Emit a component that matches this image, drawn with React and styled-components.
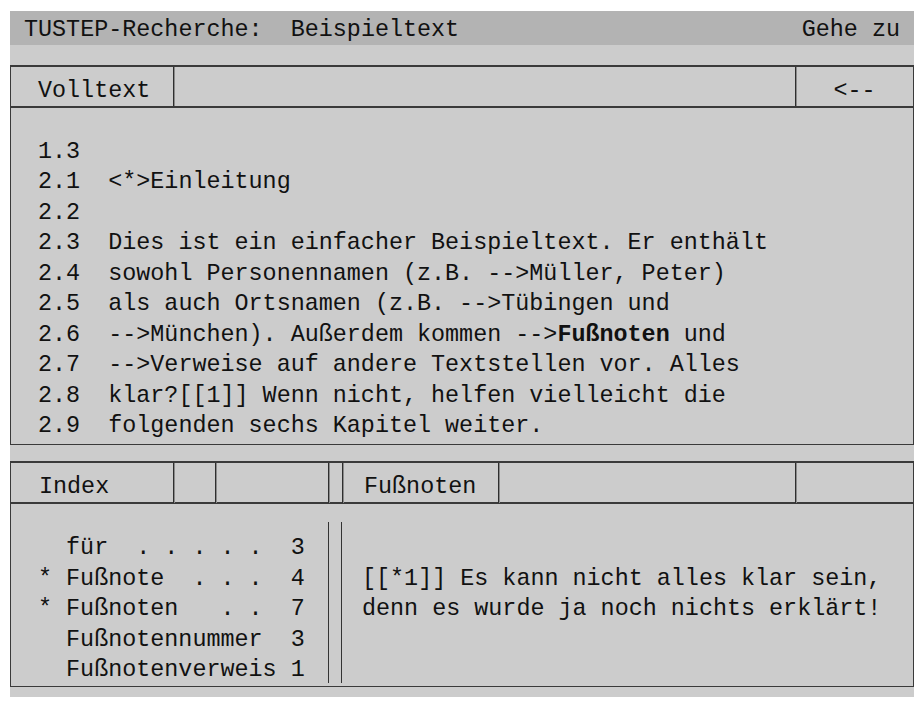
import { createGlobalStyle, styled } from 'styled-components';

const GlobalStyle = createGlobalStyle`
  body {
    margin: 0;
    background: #ffffff;
    font-family: "Liberation Mono", "DejaVu Sans Mono", monospace;
    color: #111;
  }
`

const volltext = [
  ['1.3', ''],
  ['2.1', '<*>Einleitung'],
  ['2.2', ''],
  ['2.3', 'Dies ist ein einfacher Beispieltext. Er enthält'],
  ['2.4', 'sowohl Personennamen (z.B. -->Müller, Peter)'],
  ['2.5', 'als auch Ortsnamen (z.B. -->Tübingen und'],
  ['2.6', ['-->München). Außerdem kommen -->', 'Fußnoten', ' und']],
  ['2.7', '-->Verweise auf andere Textstellen vor. Alles'],
  ['2.8', 'klar?[[1]] Wenn nicht, helfen vielleicht die'],
  ['2.9', 'folgenden sechs Kapitel weiter.'],
];

const indexRows = [
  '  für  . . . . .  3',
  '* Fußnote  . . .  4',
  '* Fußnoten   . .  7',
  '  Fußnotennummer  3',
  '  Fußnotenverweis 1',
];

const footnote = [
  '',
  '[[*1]] Es kann nicht alles klar sein,',
  'denn es wurde ja noch nichts erklärt!',
];

const App = () => {
  return (
    <>
      <GlobalStyle />
      <Screen>
        <TitleBar>
          <Mono>TUSTEP-Recherche:  Beispieltext</Mono>
          <Mono>Gehe zu</Mono>
        </TitleBar>

        <Panels>
          <Panel>
            <HeaderRow $columns="162px 1fr 118px">
              <HeaderCell $pad={27}>Volltext</HeaderCell>
              <HeaderCell $divider />
              <HeaderCell $divider $center>&lt;--</HeaderCell>
            </HeaderRow>
            <TextArea>
              {volltext.map(([num, text]) => (
                <Line key={num}>
                  {num}{'  '}
                  {Array.isArray(text) ? (
                    <>
                      {text[0]}<Bold>{text[1]}</Bold>{text[2]}
                    </>
                  ) : text}
                </Line>
              ))}
            </TextArea>
          </Panel>

          <Panel>
            <HeaderRow $columns="162px 42px 113px 14px 156px 1fr 118px">
              <HeaderCell $pad={28}>Index</HeaderCell>
              <HeaderCell $divider />
              <HeaderCell $divider />
              <HeaderCell $divider />
              <HeaderCell $divider $pad={21}>Fußnoten</HeaderCell>
              <HeaderCell $divider />
              <HeaderCell $divider />
            </HeaderRow>
            <SplitArea>
              <IndexList>
                {indexRows.map((row) => (
                  <Line key={row}>{row}</Line>
                ))}
              </IndexList>
              <DoubleRule />
              <FootnoteText>
                {footnote.map((row, i) => (
                  <Line key={i}>{row}</Line>
                ))}
              </FootnoteText>
            </SplitArea>
          </Panel>
        </Panels>
      </Screen>
    </>
  )
}

const Screen = styled.div`
  margin: 11px 0 0 10px;
  width: 904px;
  height: 686px;
  background: #cccccc;
  display: flex;
  flex-direction: column;
  font-size: 23.4px;
`

const Mono = styled.span`
  white-space: pre;
`

const TitleBar = styled.div`
  height: 34px;
  box-sizing: border-box;
  padding: 5px 14px 0 14px;
  background: #b3b3b3;
  display: flex;
  justify-content: space-between;
  align-items: center;
  line-height: 30.44px;
`

const Panels = styled.div`
  display: flex;
  flex-direction: column;
  gap: 16px;
  padding-top: 20px;
`

const Panel = styled.div`
  border: 1px solid #3a3a3a;
  border-top-width: 2px;
  background: #cccccc;
`

const HeaderRow = styled.div`
  display: grid;
  grid-template-columns: ${(p) => p.$columns};
  height: 41px;
  box-sizing: border-box;
  border-bottom: 2px solid #3a3a3a;
`

const HeaderCell = styled.div`
  box-sizing: border-box;
  padding: 9px 0 0 ${(p) => p.$pad || 0}px;
  line-height: 30.44px;
  white-space: pre;
  text-align: ${(p) => (p.$center ? 'center' : 'left')};
  border-left: ${(p) => (p.$divider ? '1px solid #2e2e2e' : 'none')};
  box-shadow: ${(p) => (p.$divider ? 'inset 1px 0 0 #8a8a8a' : 'none')};
`

const TextArea = styled.div`
  padding: 29px 0 3px 27px;
`

const Line = styled.div`
  white-space: pre;
  line-height: 30.44px;
  height: 30.44px;
`

const Bold = styled.b`
  font-weight: bold;
`

const SplitArea = styled.div`
  display: grid;
  grid-template-columns: 317px 14px 1fr;
`

const IndexList = styled.div`
  padding: 29px 0 0 27px;
`

const DoubleRule = styled.div`
  box-sizing: border-box;
  margin: 18px 0 3px;
  border-left: 1px solid #333;
  border-right: 1px solid #333;
`

const FootnoteText = styled.div`
  padding: 29px 0 0 20px;
`

export default App
